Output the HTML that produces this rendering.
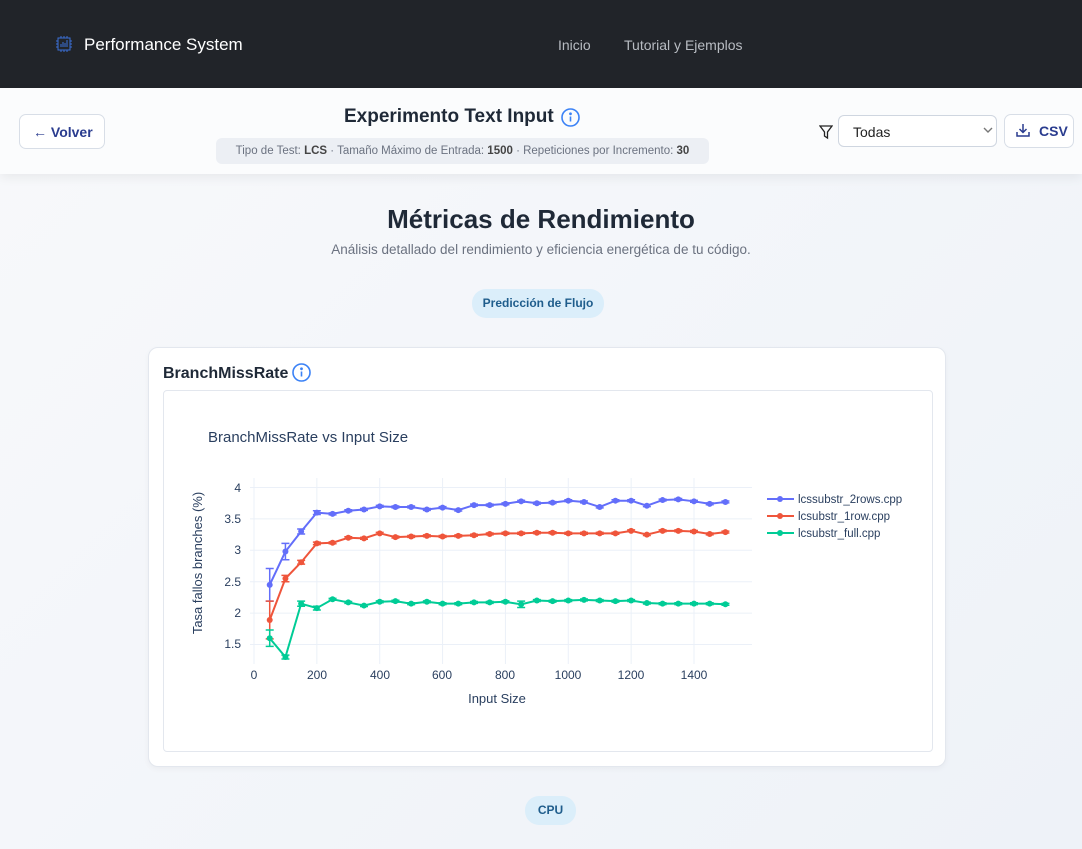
<!DOCTYPE html>
<html><head><meta charset="utf-8"><style>
*{box-sizing:border-box;margin:0;padding:0}
body{width:1082px;height:849px;overflow:hidden;font-family:"Liberation Sans","DejaVu Sans",sans-serif;background:linear-gradient(135deg,#f8f9fb,#eef2f8);position:relative;color:#1f2937}
.nav{position:absolute;left:0;top:0;width:1082px;height:88px;background:#212429}
.brand{position:absolute;left:84px;top:35px;color:#fff;font-size:17px}
.navl{position:absolute;top:37px;color:#b8bcc2;font-size:14px}
.hdr{position:absolute;left:0;top:88px;width:1082px;height:86px;background:#fbfcfd;box-shadow:0 4px 10px rgba(0,0,0,.06)}
.btn{position:absolute;border:1px solid #d8dee7;border-radius:7px;background:#fff;color:#2a3c8f;font-weight:bold;font-size:14px}
.title{position:absolute;left:344px;top:106px;font-size:19px;font-weight:bold;color:#1f2937}
.meta{position:absolute;left:216px;top:138px;width:493px;height:26px;background:#eceff4;border-radius:6px;font-size:11.5px;color:#6b7280;text-align:center;line-height:26px}
.meta b{color:#444}
.sel{position:absolute;left:838px;top:115px;width:159px;height:32px;border:1px solid #cfd6e0;border-radius:6px;background:#fff;font-size:14px;padding:8px 0 0 14px;color:#222}
h1{position:absolute;left:0;width:1082px;top:204px;text-align:center;font-size:26px;color:#1f2937}
.sub{position:absolute;left:0;width:1082px;top:242px;text-align:center;font-size:13.5px;color:#6b7280}
.pill{position:absolute;background:#dbeefa;color:#1f5d8c;font-size:12px;font-weight:bold;border-radius:14px;text-align:center}
.card{position:absolute;left:148px;top:347px;width:798px;height:420px;background:#fff;border:1px solid #e3e7ee;border-radius:10px;box-shadow:0 2px 6px rgba(0,0,0,.04)}
.inner{position:absolute;left:14px;top:42px;width:770px;height:362px;border:1px solid #e3e7ee;border-radius:4px}
.ct{position:absolute;left:14px;top:17px;font-size:16px;font-weight:bold;color:#1f2937}
</style></head><body>
<div class="nav">
<svg style="position:absolute;left:55px;top:35px" width="18" height="18" viewBox="0 0 18 18" fill="none" stroke="#3b6fd8" stroke-width="1"><rect x="3" y="3" width="12" height="12"/><path d="M6 12V9M8 12V7M10 12V8M12 12V5M1 6h2M1 9h2M1 12h2M15 6h2M15 9h2M15 12h2M6 1v2M9 1v2M12 1v2M6 15v2M9 15v2M12 15v2"/></svg>
<div class="brand">Performance System</div>
<div class="navl" style="left:558px">Inicio</div>
<div class="navl" style="left:624px">Tutorial y Ejemplos</div>
</div>
<div class="hdr"></div>
<div class="btn" style="left:19px;top:114px;width:86px;height:35px;padding:9px 0 0 13px">← Volver</div>
<div class="title">Experimento Text Input</div>
<svg style="position:absolute;left:560px;top:107px" width="21" height="21" viewBox="0 0 21 21" fill="none" stroke="#3b82f6" stroke-width="1.6"><circle cx="10.5" cy="10.5" r="8.5"/><path d="M10.5 9.5v5"/><circle cx="10.5" cy="6.8" r=".6" fill="#3b82f6"/></svg>
<div class="meta">Tipo de Test: <b>LCS</b> · Tamaño Máximo de Entrada: <b>1500</b> · Repeticiones por Incremento: <b>30</b></div>
<svg style="position:absolute;left:819px;top:125px" width="14" height="15" viewBox="0 0 14 15" fill="none" stroke="#222" stroke-width="1.3"><path d="M1 1h12L8.5 7v6l-3-2V7z"/></svg>
<div class="sel">Todas</div>
<svg style="position:absolute;left:983px;top:127px" width="10" height="6" viewBox="0 0 10 6" fill="none" stroke="#777" stroke-width="1.4"><path d="M1 1l4 4 4-4"/></svg>
<div class="btn" style="left:1004px;top:114px;width:70px;height:34px;padding:8px 0 0 34px">CSV</div>
<svg style="position:absolute;left:1015px;top:122px" width="16" height="16" viewBox="0 0 16 16" fill="none" stroke="#2a3c8f" stroke-width="1.5"><path d="M8 2v8M4.5 7L8 10.5 11.5 7M2 10v4h12v-4"/></svg>
<h1>Métricas de Rendimiento</h1>
<div class="sub">Análisis detallado del rendimiento y eficiencia energética de tu código.</div>
<div class="pill" style="left:472px;top:289px;width:132px;height:29px;line-height:29px">Predicción de Flujo</div>
<div class="card">
<div class="ct">BranchMissRate</div>
<svg style="position:absolute;left:142px;top:14px" width="21" height="21" viewBox="0 0 21 21" fill="none" stroke="#3b82f6" stroke-width="1.6"><circle cx="10.5" cy="10.5" r="8.5"/><path d="M10.5 9.5v5"/><circle cx="10.5" cy="6.8" r=".6" fill="#3b82f6"/></svg>
<div class="inner"></div>
</div>
<svg id="ch" style="position:absolute;left:0;top:0" width="1082" height="849" font-family="'Liberation Sans','DejaVu Sans',sans-serif">
<text x="208" y="442" font-size="15" fill="#2a3f5f">BranchMissRate vs Input Size</text>
<g id="grid" stroke="#ebf0f8" stroke-width="1"></g>
<g font-size="12" fill="#2a3f5f" text-anchor="end">
<text x="241" y="492">4</text><text x="241" y="523">3.5</text><text x="241" y="554">3</text><text x="241" y="586">2.5</text><text x="241" y="617">2</text><text x="241" y="648">1.5</text></g>
<g font-size="12" fill="#2a3f5f" text-anchor="middle">
<text x="254" y="679">0</text><text x="317" y="679">200</text><text x="380" y="679">400</text><text x="442" y="679">600</text><text x="505" y="679">800</text><text x="568" y="679">1000</text><text x="631" y="679">1200</text><text x="694" y="679">1400</text>
<text x="497" y="703" font-size="13">Input Size</text>
<text transform="translate(202,563) rotate(-90)" font-size="13">Tasa fallos branches (%)</text></g>
<g id="lines"></g>
<g font-size="11.5" fill="#2a3f5f">
<line x1="767" y1="499" x2="794" y2="499" stroke="#636efa" stroke-width="2"/><circle cx="780" cy="499" r="3" fill="#636efa"/><text x="798" y="503">lcssubstr_2rows.cpp</text>
<line x1="767" y1="516" x2="794" y2="516" stroke="#ef553b" stroke-width="2"/><circle cx="780" cy="516" r="3" fill="#ef553b"/><text x="798" y="520">lcsubstr_1row.cpp</text>
<line x1="767" y1="533" x2="794" y2="533" stroke="#00cc96" stroke-width="2"/><circle cx="780" cy="533" r="3" fill="#00cc96"/><text x="798" y="537">lcsubstr_full.cpp</text></g>
</svg>
<div class="pill" style="left:525px;top:796px;width:51px;height:29px;line-height:29px">CPU</div>
<script>
var X=function(v){return 254+v*440/1400},Y=function(v){return 487.5+(4-v)*62.8};
var ns="http://www.w3.org/2000/svg",g=document.getElementById('grid'),L=document.getElementById('lines');
function el(p,t,a){var e=document.createElementNS(ns,t);for(var k in a)e.setAttribute(k,a[k]);p.appendChild(e);return e}
[1.5,2,2.5,3,3.5,4].forEach(function(v){el(g,'line',{x1:250,x2:752,y1:Y(v),y2:Y(v)})});
[0,200,400,600,800,1000,1200,1400].forEach(function(v){el(g,'line',{x1:X(v),x2:X(v),y1:478,y2:664})});
var d=[["#636efa",[2.45,2.98,3.3,3.6,3.58,3.63,3.65,3.7,3.69,3.69,3.65,3.68,3.64,3.72,3.72,3.74,3.78,3.75,3.76,3.79,3.77,3.69,3.79,3.79,3.71,3.8,3.81,3.78,3.74,3.77]],
["#ef553b",[1.89,2.55,2.81,3.11,3.12,3.2,3.19,3.27,3.21,3.22,3.23,3.22,3.23,3.24,3.26,3.27,3.27,3.28,3.28,3.27,3.27,3.27,3.27,3.31,3.25,3.31,3.31,3.3,3.26,3.29]],
["#00cc96",[1.6,1.3,2.15,2.08,2.22,2.17,2.12,2.18,2.19,2.15,2.18,2.15,2.15,2.17,2.17,2.18,2.14,2.2,2.19,2.2,2.21,2.2,2.19,2.2,2.16,2.15,2.15,2.15,2.15,2.14]]];
var err=[[0.26,0.13,0.04,0.03],[0.3,0.05,0.03,0.02],[0.13,0.03,0.04,0.03]];
d.forEach(function(s,i){var pts=s[1].map(function(v,j){return X(50*(j+1))+","+Y(v)}).join(" ");
el(L,'polyline',{points:pts,fill:"none",stroke:s[0],"stroke-width":2});
s[1].forEach(function(v,j){var x=X(50*(j+1)),y=Y(v);el(L,'circle',{cx:x,cy:y,r:3,fill:s[0]});
var e=j<4?err[i][j]:0.015;if(i==2&&j==16)e=0.05;
el(L,'path',{d:"M"+(x-4)+" "+Y(v+e)+"h8M"+x+" "+Y(v+e)+"V"+Y(v-e)+"M"+(x-4)+" "+Y(v-e)+"h8",stroke:s[0],"stroke-width":1.5,fill:"none"})})});
</script>
</body></html>
